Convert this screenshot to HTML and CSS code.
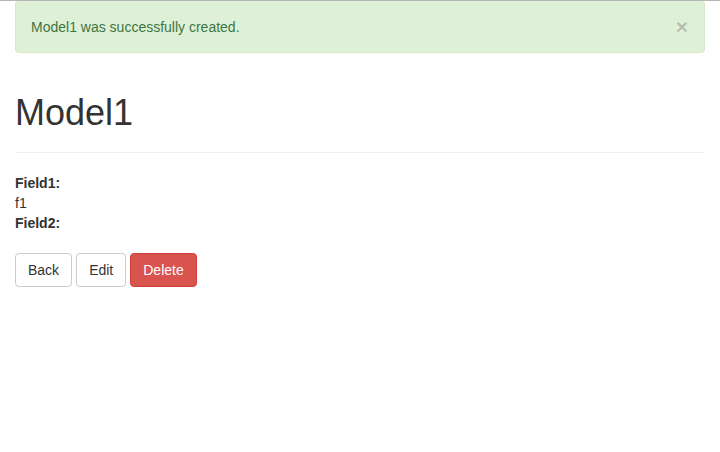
FILE: index.html
```html
<!DOCTYPE html>
<html>
<head>
<meta charset="utf-8">
<link rel="stylesheet" href="styles.css">
</head>
<body>
<div class="topline"></div>
<div class="container">
  <div class="alert">
    <span class="alert-text">Model1 was successfully created.</span>
    <button class="close" type="button">&times;</button>
  </div>
  <div class="page-header">
    <h1>Model1</h1>
  </div>
  <div class="details">
    <div class="label">Field1:</div>
    <div class="value">f1</div>
    <div class="label">Field2:</div>
  </div>
  <div class="actions">
    <a class="btn btn-default" href="#">Back</a>
    <a class="btn btn-default" href="#">Edit</a>
    <a class="btn btn-danger" href="#">Delete</a>
  </div>
</div>
</body>
</html>
```

FILE: styles.css
```css
* { box-sizing: border-box; }
html, body {
  margin: 0;
  padding: 0;
  background: #fff;
}
body {
  font-family: "Liberation Sans", Arial, sans-serif;
  font-size: 14px;
  line-height: 20px;
  color: #333;
}
.topline {
  position: fixed;
  top: 0;
  left: 0;
  right: 0;
  height: 1px;
  background: #b4b4b4;
  z-index: 10;
}
.container {
  padding: 0 15px;
}
.alert {
  display: flex;
  align-items: center;
  justify-content: space-between;
  padding: 15px 16px 15px 15px;
  margin-bottom: 20px;
  border: 1px solid #d6e9c6;
  border-radius: 4px;
  background: #dff0d8;
  color: #3c763d;
}
.close {
  background: none;
  border: 0;
  padding: 0;
  font-family: "Liberation Sans", Arial, sans-serif;
  font-size: 21px;
  font-weight: bold;
  line-height: 1;
  color: #000;
  opacity: 0.2;
  text-shadow: 0 1px 0 #fff;
  cursor: pointer;
  margin-top: 0;
}
.page-header {
  margin: 40px 0 20px;
  padding-bottom: 9px;
  border-bottom: 1px solid #eee;
}
h1 {
  margin: 0 0 10px;
  font-size: 36px;
  font-weight: 500;
  line-height: 1.1;
  color: #333;
}
.details {
  margin-bottom: 20px;
}
.label {
  font-weight: bold;
}
.actions {
  display: flex;
  gap: 4px;
}
.btn {
  display: inline-block;
  padding: 6px 12px;
  font-size: 14px;
  line-height: 20px;
  border: 1px solid transparent;
  border-radius: 4px;
  text-decoration: none;
}
.btn-default {
  color: #333;
  background: #fff;
  border-color: #ccc;
}
.btn-danger {
  color: #fff;
  background: #d9534f;
  border-color: #d43f3a;
}
```
